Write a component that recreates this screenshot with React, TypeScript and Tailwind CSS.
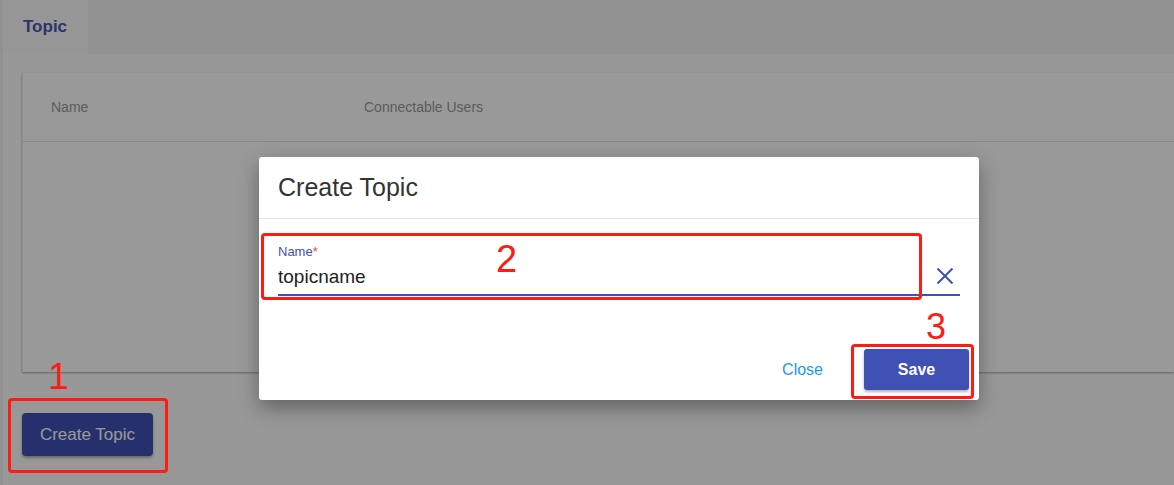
import React, { useState } from "react";

const font = { fontFamily: '"Liberation Sans", Arial, sans-serif' };

const App: React.FC = () => {
  const [name, setName] = useState("topicname");

  return (
    <div className="relative w-[1174px] h-[485px] overflow-hidden bg-[#fdfdfd]" style={font}>
      {/* page under the modal */}
      <div className="flex h-full border-l-[3px] border-[#f0f0f0]">
        <div className="flex flex-col flex-1">
          <div className="flex h-[54px] bg-[#f4f4f4]">
            <div className="w-[85px] bg-[#fbfbfb] flex items-center pl-[20px] text-[17px] font-bold text-[#4a57b0]">
              Topic
            </div>
          </div>

          <div className="pl-[19px] pt-[19px]">
            <div className="h-[299px] bg-white border-l border-[#ececec] shadow-[0_1px_2px_rgba(0,0,0,0.35)]">
              <div className="flex items-center h-[69px] border-b border-[#e0e0e0] text-[14px] text-[#999]">
                <div className="w-[341px] pl-[28px]">Name</div>
                <div>Connectable Users</div>
              </div>
            </div>

            <button className="mt-[41px] w-[131px] h-[43px] rounded-[4px] bg-[#3f51b5] text-white text-[17px] shadow-[0_2px_3px_rgba(0,0,0,0.3)]">
              Create Topic
            </button>
          </div>
        </div>
      </div>

      {/* backdrop */}
      <div className="absolute inset-0 bg-black/40" />

      {/* dialog */}
      <div className="absolute left-[259px] top-[157px] w-[720px] h-[243px] bg-white rounded-[3px] shadow-[0_8px_20px_rgba(0,0,0,0.35)] flex flex-col">
        <div className="h-[62px] border-b border-[#e3e3e3] flex items-center px-[19px] pt-[1px] text-[25px] text-[#333]">
          Create Topic
        </div>
        <div className="px-[19px] pt-[25px]">
          <div className="flex items-end border-b-2 border-[#3f51b5]">
            <div className="flex-1 flex flex-col">
              <label className="text-[13px] leading-[15px] text-[#3f51b5]">
                Name<span className="text-[#f44336]">*</span>
              </label>
              <input
                value={name}
                onChange={(e) => setName(e.target.value)}
                className="h-[35px] text-[19px] text-[#222] outline-none bg-transparent"
                style={font}
              />
            </div>
            <button className="w-[30px] h-[36px] flex items-center justify-center text-[#3f51b5]">
              <svg width="18" height="18" viewBox="0 0 18 18" fill="none" stroke="currentColor" strokeWidth="2">
                <path d="M1.5 1.5 L16.5 16.5 M16.5 1.5 L1.5 16.5" />
              </svg>
            </button>
          </div>
        </div>
        <div className="mt-auto flex items-center justify-end gap-[41px] pr-[10px] pb-[10px]">
          <button className="text-[16px] text-[#2196f3]">Close</button>
          <button className="w-[105px] h-[41px] rounded-[3px] bg-[#3f51b5] text-white text-[16px] font-bold shadow-[0_2px_3px_rgba(0,0,0,0.3)]">
            Save
          </button>
        </div>
      </div>

      {/* annotations */}
      <div className="absolute left-[8px] top-[398px] w-[160px] h-[75px] border-[3px] border-[#ff1a12] rounded-[4px]" />
      <div className="absolute left-[261px] top-[233px] w-[661px] h-[67px] border-[3px] border-[#ff1a12] rounded-[4px]" />
      <div className="absolute left-[851px] top-[344px] w-[123px] h-[55px] border-[3px] border-[#ff1a12] rounded-[4px]" />
      <div className="absolute left-[48px] top-[357px] text-[37px] leading-[40px] text-[#ff1a12]">1</div>
      <div className="absolute left-[496px] top-[239px] text-[38px] leading-[40px] text-[#ff1a12]">2</div>
      <div className="absolute left-[926px] top-[307px] text-[36px] leading-[40px] text-[#ff1a12]">3</div>
    </div>
  );
};

export default App;
